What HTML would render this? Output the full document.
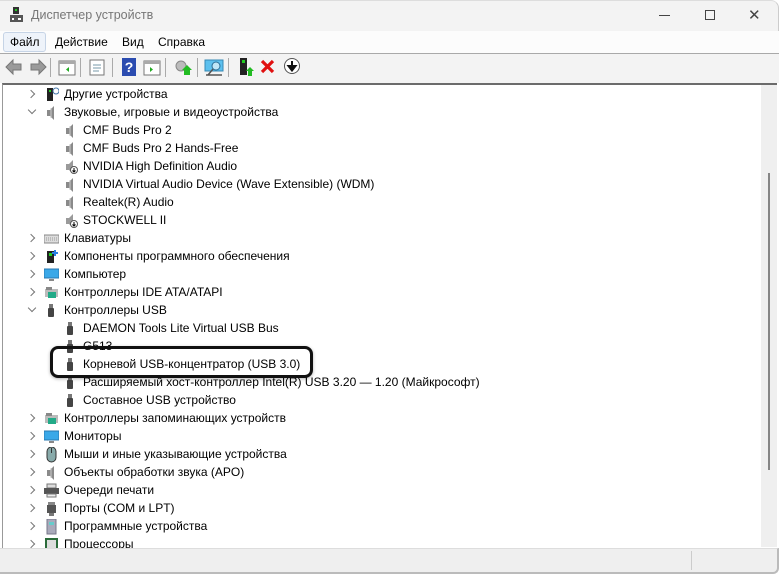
<!DOCTYPE html>
<html><head><meta charset="utf-8"><style>
*{margin:0;padding:0;box-sizing:border-box}
body{width:779px;height:574px;overflow:hidden;background:#fff;font-family:"Liberation Sans",sans-serif;font-size:12px;color:#000;position:relative}
.abs{position:absolute}
#title{left:0;top:0;width:779px;height:32px;background:#f3f3f3;border-top-right-radius:8px;border-right:1px solid #ccc;border-top:1px solid #ddd}
#menu{left:0;top:31px;width:779px;height:23px;background:#fcfcfc;border-bottom:1px solid #a9a9a9}
#tool{left:0;top:54px;width:779px;height:29px;background:#f3f3f3}
#tree{left:2px;top:83px;width:775px;height:465px;background:#fff;border-top:2px solid #6b6b6b;border-left:1px solid #999;overflow:hidden}
#sb{left:761px;top:85px;width:16px;height:462px;background:#efefef}
.row{position:absolute;height:18px;line-height:18px;white-space:nowrap;font-size:12px}
.arr{position:absolute;width:6px;height:6px;border-right:1.3px solid #777;border-bottom:1.3px solid #777}
.ic{position:absolute;width:15px;height:16px}
.sep{position:absolute;top:58px;width:1px;height:19px;background:#aaa}
</style></head><body>
<div id="title" class="abs"></div>
<svg class="abs" style="left:9px;top:6px" width="16" height="18"><rect x="4" y="1" width="6" height="7" fill="#333"/><rect x="6" y="3" width="2" height="2" fill="#2c2"/><rect x="1" y="9" width="13" height="7" fill="#555"/><rect x="3" y="12" width="2" height="2" fill="#fff"/><rect x="9" y="12" width="3" height="2" fill="#fff"/></svg>
<div class="abs" style="left:31px;top:8px;font-size:12.5px;color:#777">Диспетчер устройств</div>
<div class="abs" style="left:659px;top:15px;width:11px;height:1px;background:#444"></div>
<div class="abs" style="left:705px;top:10px;width:10px;height:10px;border:1px solid #444"></div>
<div class="abs" style="left:748px;top:9px;font-size:15px;color:#444;line-height:13px">✕</div>
<div id="menu" class="abs"></div>
<div class="abs" style="left:3px;top:32px;width:43px;height:20px;background:#eef3fa;border:1px solid #c6d4e6;border-radius:3px"></div>
<div class="abs" style="left:10px;top:35px;font-size:12px">Файл</div>
<div class="abs" style="left:55px;top:35px">Действие</div>
<div class="abs" style="left:122px;top:35px">Вид</div>
<div class="abs" style="left:158px;top:35px">Справка</div>
<div id="tool" class="abs"></div>
<svg class="abs" style="left:4px;top:58px" width="44" height="18"><path d="M2 9 L9 2 V6 H17 V12 H9 V16Z" fill="#9a9a9a" stroke="#777"/><path d="M42 9 L35 2 V6 H27 V12 H35 V16Z" fill="#9a9a9a" stroke="#777"/></svg>
<div class="sep" style="left:50px"></div>
<svg class="abs" style="left:58px;top:60px" width="18" height="16"><rect x="1" y="1" width="16" height="14" fill="#fff" stroke="#777"/><rect x="1" y="1" width="16" height="3" fill="#aaa"/><path d="M11 7 L8 9.5 L11 12Z" fill="#2a2"/></svg>
<div class="sep" style="left:80px"></div>
<svg class="abs" style="left:89px;top:59px" width="16" height="17"><rect x="1" y="1" width="14" height="15" fill="#fff" stroke="#777"/><path d="M4 6h8M4 9h8M4 12h6" stroke="#79a"/></svg>
<div class="sep" style="left:112px"></div>
<div class="abs" style="left:122px;top:58px;width:14px;height:18px;background:#2b4cb0;color:#fff;font-weight:bold;font-size:14px;text-align:center;line-height:18px">?</div>
<svg class="abs" style="left:143px;top:60px" width="18" height="16"><rect x="1" y="1" width="16" height="14" fill="#fff" stroke="#777"/><rect x="1" y="1" width="16" height="3" fill="#aaa"/><path d="M7 7 L10 9.5 L7 12Z" fill="#2a2"/></svg>
<div class="sep" style="left:165px"></div>
<svg class="abs" style="left:174px;top:58px" width="18" height="18"><circle cx="7" cy="8" r="5" fill="#bbb" stroke="#888"/><path d="M10 17 V12 H8 L13 7 L18 12 H16 V17Z" fill="#2b2"/></svg>
<div class="sep" style="left:197px"></div>
<svg class="abs" style="left:204px;top:58px" width="20" height="20"><rect x="1" y="2" width="18" height="11" fill="#5cc0ee" stroke="#3689b5"/><circle cx="12" cy="8" r="4" fill="#bfe6f7" stroke="#2a6f99"/><path d="M9 11 L4 17 M2 17h16" stroke="#555" stroke-width="1.5"/></svg>
<div class="sep" style="left:228px"></div>
<svg class="abs" style="left:237px;top:57px" width="18" height="20"><rect x="3" y="1" width="7" height="17" fill="#222"/><rect x="5" y="3" width="3" height="3" fill="#2c2"/><path d="M11 19 V14 H9 L13 10 L17 14 H15 V19Z" fill="#2b2"/></svg>
<svg class="abs" style="left:260px;top:59px" width="15" height="15"><path d="M2 2 L13 13 M13 2 L2 13" stroke="#e01010" stroke-width="3.2"/></svg>
<svg class="abs" style="left:283px;top:57px" width="18" height="18"><circle cx="9" cy="9" r="7.5" fill="#fff" stroke="#555"/><path d="M9 4 V10 M5.5 9 L9 13.5 L12.5 9Z" stroke="#111" stroke-width="2" fill="#111"/></svg>
<div id="tree" class="abs"></div>
<div id="sb" class="abs"></div>
<div class="abs" style="left:768px;top:173px;width:2px;height:297px;background:#858585"></div>
<div id="rows"></div>
<div class="abs" style="left:50px;top:346px;width:263px;height:32px;border:3px solid #111;border-radius:8px;box-shadow:0 1px 3px rgba(0,0,0,.3)"></div>
<script>
var R=[
[0,'c','q','Другие устройства'],[0,'e','s','Звуковые, игровые и видеоустройства'],
[1,'','s','CMF Buds Pro 2'],[1,'','s','CMF Buds Pro 2 Hands-Free'],[1,'','sd','NVIDIA High Definition Audio'],
[1,'','s','NVIDIA Virtual Audio Device (Wave Extensible) (WDM)'],[1,'','s','Realtek(R) Audio'],[1,'','sd','STOCKWELL II'],
[0,'c','k','Клавиатуры'],[0,'c','p','Компоненты программного обеспечения'],[0,'c','m','Компьютер'],[0,'c','i','Контроллеры IDE ATA/ATAPI'],
[0,'e','u','Контроллеры USB'],[1,'','u','DAEMON Tools Lite Virtual USB Bus'],[1,'','u','G513'],[1,'','u','Корневой USB-концентратор (USB 3.0)'],
[1,'','u','Расширяемый хост-контроллер Intel(R) USB 3.20 — 1.20 (Майкрософт)'],[1,'','u','Составное USB устройство'],
[0,'c','i','Контроллеры запоминающих устройств'],[0,'c','m','Мониторы'],[0,'c','ms','Мыши и иные указывающие устройства'],
[0,'c','s','Объекты обработки звука (APO)'],[0,'c','pr','Очереди печати'],[0,'c','po','Порты (COM и LPT)'],[0,'c','sw','Программные устройства'],[0,'c','cpu','Процессоры']];
var I={
q:'<rect x="3" y="1" width="6" height="13" fill="#222"/><rect x="5" y="3" width="2" height="2" fill="#2c2"/><circle cx="12" cy="4" r="3" fill="#fff" stroke="#47a"/>',
s:'<path d="M3 5h3l4-4v14l-4-4H3z" fill="#8a8a8a"/><path d="M7 3v10" stroke="#ccc"/>',
sd:'<path d="M3 5h3l4-4v14l-4-4H3z" fill="#9a9a9a"/><circle cx="11" cy="11" r="3.5" fill="#fff" stroke="#555"/><path d="M11 9v4M9.5 11.5l1.5 1.5 1.5-1.5" stroke="#000"/>',
k:'<rect x="0" y="4" width="15" height="8" fill="#ddd" stroke="#888"/><path d="M2 7h11M2 9h11" stroke="#999" stroke-dasharray="1 1"/>',
p:'<rect x="3" y="2" width="7" height="12" fill="#222"/><rect x="5" y="4" width="3" height="3" fill="#2c2"/><path d="M11 1v6M8 4h6" stroke="#2a7de1" stroke-width="2"/>',
m:'<rect x="0" y="2" width="15" height="9" fill="#3aa8e8" stroke="#2878b0"/><rect x="5" y="12" width="5" height="2" fill="#888"/>',
i:'<rect x="1" y="4" width="13" height="8" fill="#bbb"/><rect x="4" y="7" width="8" height="6" fill="#2a8"/><rect x="2" y="2" width="6" height="3" fill="#888"/>',
u:'<rect x="5" y="1" width="4" height="4" fill="#777"/><rect x="4" y="5" width="6" height="9" rx="1" fill="#444"/>',
ms:'<rect x="3" y="0" width="9" height="15" rx="4.5" fill="#8aa" stroke="#333"/><path d="M7.5 1v5" stroke="#333"/>',
pr:'<rect x="3" y="1" width="9" height="4" fill="#ddd" stroke="#777"/><rect x="0" y="5" width="15" height="6" fill="#555"/><rect x="3" y="11" width="9" height="3" fill="#eee" stroke="#777"/>',
po:'<rect x="4" y="1" width="7" height="3" fill="#888"/><rect x="3" y="4" width="9" height="8" fill="#555"/><rect x="5" y="12" width="5" height="3" fill="#777"/>',
sw:'<rect x="3" y="0" width="9" height="15" fill="#aab" stroke="#778"/><rect x="5" y="3" width="5" height="3" fill="#6cc"/>',
cpu:'<rect x="1" y="1" width="13" height="13" fill="#2b6b3a"/><rect x="3" y="3" width="9" height="9" fill="#ddd"/>'};
var h='';
R.forEach(function(r,i){var cy=95+18*i,top=cy-9,lv=r[0];
if(r[1]=='c')h+='<div class="arr" style="left:28px;top:'+(cy-4)+'px;transform:rotate(-45deg)"></div>';
if(r[1]=='e')h+='<div class="arr" style="left:29px;top:'+(cy-6)+'px;transform:rotate(45deg)"></div>';
var ix=lv?63:44,tx=lv?83:64;
h+='<svg class="ic" style="left:'+ix+'px;top:'+(cy-8)+'px" width="15" height="16">'+I[r[2]]+'</svg>';
h+='<div class="row" style="left:'+tx+'px;top:'+(top-1)+'px">'+r[3]+'</div>';});
document.getElementById('rows').innerHTML=h;
</script>
<div class="abs" style="left:0;top:548px;width:779px;height:26px;background:#efefef;border-top:1px solid #ddd;border-bottom:2px solid #bbb;border-right:2px solid #bbb;border-bottom-right-radius:6px"></div>
<div class="abs" style="left:691px;top:551px;width:1px;height:19px;background:#ccc"></div>
</body></html>
